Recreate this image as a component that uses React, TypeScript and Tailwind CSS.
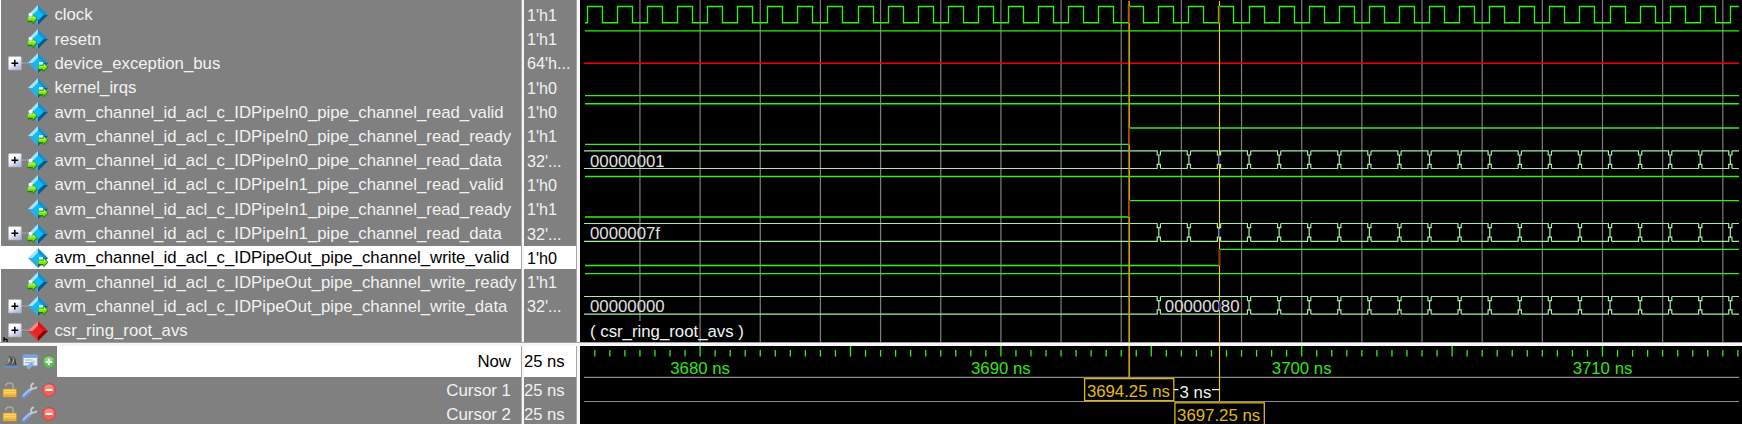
import React from "react";

type Kind = "in" | "out" | "group";
type Signal = { name: string; value: string; kind: Kind; expand?: boolean; selected?: boolean };

const signals: Signal[] = [
  { name: "clock", value: "1'h1", kind: "in" },
  { name: "resetn", value: "1'h1", kind: "in" },
  { name: "device_exception_bus", value: "64'h...", kind: "out", expand: true },
  { name: "kernel_irqs", value: "1'h0", kind: "out" },
  { name: "avm_channel_id_acl_c_IDPipeIn0_pipe_channel_read_valid", value: "1'h0", kind: "in" },
  { name: "avm_channel_id_acl_c_IDPipeIn0_pipe_channel_read_ready", value: "1'h1", kind: "out" },
  { name: "avm_channel_id_acl_c_IDPipeIn0_pipe_channel_read_data", value: "32'...", kind: "in", expand: true },
  { name: "avm_channel_id_acl_c_IDPipeIn1_pipe_channel_read_valid", value: "1'h0", kind: "in" },
  { name: "avm_channel_id_acl_c_IDPipeIn1_pipe_channel_read_ready", value: "1'h1", kind: "out" },
  { name: "avm_channel_id_acl_c_IDPipeIn1_pipe_channel_read_data", value: "32'...", kind: "in", expand: true },
  { name: "avm_channel_id_acl_c_IDPipeOut_pipe_channel_write_valid", value: "1'h0", kind: "out", selected: true },
  { name: "avm_channel_id_acl_c_IDPipeOut_pipe_channel_write_ready", value: "1'h1", kind: "in" },
  { name: "avm_channel_id_acl_c_IDPipeOut_pipe_channel_write_data", value: "32'...", kind: "out", expand: true },
  { name: "csr_ring_root_avs", value: "", kind: "group", expand: true },
];

function SignalIcon({ kind }: { kind: Kind }) {
  const c =
    kind === "group"
      ? { tl: "#f48a86", tr: "#d81414", bl: "#e03030", br: "#7e0000", mid: "#ee2222" }
      : { tl: "#a4e4f8", tr: "#1490d4", bl: "#3aa6e4", br: "#045a8c", mid: "#0cbcf4" };
  return (
    <svg className="h-[22px] w-[22px] shrink-0" viewBox="0 0 22 22">
      <path d="M11 1L11 11L1 11Z" fill={c.tl} />
      <path d="M11 1L21 11L11 11Z" fill={c.tr} />
      <path d="M1 11L11 11L11 21Z" fill={c.bl} />
      <path d="M21 11L11 21L11 11Z" fill={c.br} />
      <path d="M11 5.4L16.6 11L11 16.6L5.4 11Z" fill={c.mid} />
      {kind === "in" && (
        <g>
          <path d="M1.8 9H5.6V12.6H1.8Z" fill="#eefcff" />
          <path d="M0.6 13H5.8V9.8L10.6 15L5.8 20.4V18.2H0.6Z" fill="#1c7c08" />
          <path d="M0.6 13H5.8V10.6L9.8 14.6L5.8 18.8V16.8H0.6Z" fill="#7ae60c" />
          <path d="M1.2 13.5H6.6V12.2L8.4 14.2H1.2Z" fill="#d4fb88" />
        </g>
      )}
      {kind === "out" && (
        <g>
          <path d="M12 10H16V12.6H12Z" fill="#d8f6ff" />
          <path d="M11.4 13.4H16.4V10L21.4 15.2L16.4 20.6V18.4H11.4Z" fill="#1c7c08" />
          <path d="M11.4 13.4H16.4V10.8L20.6 15L16.4 19V17H11.4Z" fill="#7ae60c" />
          <path d="M12 13.9H17V12.6L18.8 14.6H12Z" fill="#d4fb88" />
        </g>
      )}
    </svg>
  );
}

function Expander() {
  return (
    <svg className="h-[22px] w-5 shrink-0" viewBox="0 0 20 22">
      <defs>
        <linearGradient id="box" x1="0" y1="0" x2="0.6" y2="1">
          <stop offset="0.4" stopColor="#ffffff" />
          <stop offset="1" stopColor="#b4bedc" />
        </linearGradient>
      </defs>
      <rect x="0.4" y="4.6" width="13" height="13.4" rx="1" fill="url(#box)" stroke="#a2aac6" strokeWidth="0.6" />
      <path d="M3.4 11.2H10.2M6.8 7.8V14.6" stroke="#000" strokeWidth="1.5" />
      <path d="M14.2 11H20" stroke="#c8c8c8" strokeWidth="1" strokeDasharray="1.2 1.2" />
    </svg>
  );
}

function CircleIcon({ plus }: { plus?: boolean }) {
  return (
    <svg className="h-4 w-4" viewBox="0 0 16 16">
      <circle cx="8" cy="8" r="6.5" fill={plus ? "#62b858" : "#ef5f55"} stroke={plus ? "#3e9c3a" : "#d83c36"} strokeWidth="0.8" />
      <path d="M3 6A5.4 5.4 0 0 1 13 6Q8 8.4 3 6Z" fill={plus ? "#8ccf80" : "#f78a80"} />
      <path d={plus ? "M4.6 8H11.4M8 4.6V11.4" : "M4.4 8H11.6"} stroke="#fff" strokeWidth="2.1" />
    </svg>
  );
}

function LockIcon() {
  return (
    <svg className="h-4 w-4" viewBox="0 0 16 16">
      <path d="M3.6 4.2Q4 1 7.4 1Q11 1 11.2 4V8" fill="none" stroke="#aca69c" strokeWidth="1.7" />
      <rect x="1" y="7" width="13.6" height="8" rx="0.6" fill="#f5bd3c" stroke="#c98e26" strokeWidth="0.7" />
      <path d="M1.8 8.3H13.8M1.8 10.8H13.8" stroke="#ffe08a" strokeWidth="1.1" />
      <path d="M1.8 13.2H13.8" stroke="#e5a32a" strokeWidth="1" />
    </svg>
  );
}

function WrenchIcon() {
  return (
    <svg className="h-[17px] w-[17px]" viewBox="0 0 17 17">
      <path d="M2.8 14.2L8.4 8.6" stroke="#6f96dc" strokeWidth="4.4" strokeLinecap="round" />
      <path d="M2.6 13.4L7.8 8.2" stroke="#a9c6f8" strokeWidth="1.6" strokeLinecap="round" />
      <path d="M8.4 8.6L11.2 5.8" stroke="#c6c6c6" strokeWidth="2.4" />
      <path d="M13 1.4Q9.6 2 10.2 5.2Q11.6 8 15.6 5.4M10.6 6.4Q13.4 7.4 15.8 4.8" fill="none" stroke="#cccccc" strokeWidth="1.8" />
    </svg>
  );
}

function NowIcon() {
  return (
    <svg className="h-4 w-[15px]" viewBox="0 0 15 16">
      <path d="M1.4 11.6L4.4 5.2L4 2.6L6.4 1.4L8 3.4L10 1.6L11.4 4.4L13.2 11.6Z" fill="#606060" />
      <path d="M5 2.4L6.4 6.4L3 11ZM9.6 3L10.4 7.6L8 10Z" fill="#a8a8a8" />
      <path d="M7.4 4L8 8M11 5L12 11" stroke="#3c3c3c" strokeWidth="1.2" />
      <path d="M1 13H14M1.2 11.2V14.6M13.6 11.2V14.6" stroke="#5a94e6" strokeWidth="1.2" />
    </svg>
  );
}

function PropsIcon() {
  return (
    <svg className="h-[17px] w-[17px]" viewBox="0 0 17 17">
      <rect x="1.2" y="1.8" width="14.4" height="11" rx="0.8" fill="#edf2fa" stroke="#8cacdf" strokeWidth="0.9" />
      <path d="M1.2 3.4H15.6" stroke="#709fe6" strokeWidth="2.8" />
      <path d="M3 7H11M3 9.6H9" stroke="#a8afbc" strokeWidth="1.2" />
      <path d="M6.8 14.2L10.4 10.6" stroke="#86abea" strokeWidth="4" strokeLinecap="round" />
      <path d="M10.4 10.6L13.4 8" stroke="#c4c8d0" strokeWidth="2" />
    </svg>
  );
}

const PX_PER_NS = 30.08;
const LEFT = 580;
const xAt = (t: number) => 1301.7 + (t - 3700) * PX_PER_NS - LEFT;
const X0 = 5;
const X1 = 1159;
const C1 = 549.2;
const C2 = 639.5;

const range = (n: number) => Array.from({ length: n }, (_, i) => i);

function clockPath() {
  let d = `M${X0} 22.7`;
  for (const i of range(39)) {
    const r = Math.floor(xAt(3676.25 + i)) + 0.5;
    const f = r + 15;
    d += `H${r}V6.5`;
    if (f < X1) d += `H${f}V22.7`;
  }
  return d + `H${X1}`;
}

function busPath(top: number, bottom: number, edges: number[]) {
  let d = "";
  let a = X0 - 1;
  for (const x of edges) {
    d += `M${a} ${top}H${x - 1.6}V${top + 4.2}H${x}V${bottom - 4.2}H${x - 1.6}V${bottom}H${a}`;
    d += `M${x} ${top + 4.2}H${x + 1.6}V${top}M${x} ${bottom - 4.2}H${x + 1.6}V${bottom}`;
    a = x + 1.6;
  }
  return d + `M${a} ${top}H${X1}M${a} ${bottom}H${X1}`;
}

const allEdges = range(20).map((i) => xAt(3695.25 + i));
const outEdges = allEdges.filter((_, i) => i !== 1 && i !== 2);

function Waves() {
  return (
    <svg className="block h-[342px] w-[1162px] shrink-0 bg-black" viewBox="0 0 1162 342" fontFamily="'Liberation Sans', Arial, sans-serif" fontSize="16.8">
      <g stroke="#7e7e7e" strokeWidth="1.2">
        {range(19).map((i) => (
          <path key={i} d={`M${xAt(3678 + i * 2)} 0V${i === 0 ? 321 : 342}`} />
        ))}
      </g>
      <g fill="none" stroke="#2cf40e" strokeWidth="1.35">
        <path d={clockPath()} />
        <path d={`M${X0} 30.8H${X1}`} />
        <path d={`M${X0} 95.6H${X1}`} />
        <path d={`M${X0} 103.7H${X1}`} />
        <path d={`M${X0} 144.4H${C1}V128H${X1}`} />
        <path d={`M${X0} 176.5H${X1}`} />
        <path d={`M${X0} 217H${C1}V200.6H${X1}`} />
        <path d={`M${X0} 265.5H${C2}V249.4H${X1}`} />
        <path d={`M${X0} 273.6H${X1}`} />
      </g>
      <path d={`M${X0 - 1} 63.3H${X1}`} stroke="#f00000" strokeWidth="1.5" />
      <g fill="none" stroke="#a4eea6" strokeWidth="1.2">
        <path d={busPath(150.8, 168.5, allEdges)} />
        <path d={busPath(223.5, 241.3, allEdges)} />
        <path d={busPath(296.5, 314.1, outEdges)} />
      </g>
      <g fill="#e0e0e0">
        <text x="10" y="166.6">00000001</text>
        <text x="10" y="239.4">0000007f</text>
        <text x="10" y="312.4">00000000</text>
        <text x="584.8" y="312.4">00000080</text>
        <text x="10" y="336.8" fill="#f4f4f4">( csr_ring_root_avs )</text>
      </g>
      <path d={`M${C1} 1V342`} stroke="#c89c0c" strokeWidth="1.7" />
      <path d={`M${C2} 1V342`} stroke="#f4cf10" strokeWidth="1.1" />
      <g stroke="#a82418" strokeWidth="1.5">
        <path d={`M${C1} 6V23M${C1} 127.5V144.5M${C1} 200V217`} />
        <path d={`M${C2} 6V23M${C2} 249V266`} />
      </g>
      <path d={`M${C2} 155.5V164M${C2} 229V237M${C2} 301V310`} stroke="#4422b8" strokeWidth="1.2" />
    </svg>
  );
}

function Timeline() {
  return (
    <svg className="block h-[78px] w-[1162px] shrink-0 bg-black" viewBox="0 346 1162 78" fontFamily="'Liberation Sans', Arial, sans-serif" fontSize="16.8">
      <g stroke="#2cf40e" strokeWidth="1.3">
        {range(77).map((i) => (
          <path key={i} d={`M${xAt(3676.5 + i / 2)} ${(i - 7) % 10 === 0 ? 346 : 350}V356.6`} />
        ))}
      </g>
      <g fill="#34e41c" textAnchor="middle">
        {[3680, 3690, 3700, 3710].map((t) => (
          <text key={t} x={xAt(t)} y="374">{t} ns</text>
        ))}
      </g>
      <path d="M4 377.4H1159M4 401.5H1159" stroke="#8a8a8a" strokeWidth="1.1" />
      <path d={`M${C1} 346V378`} stroke="#c89c0c" strokeWidth="1.7" />
      <path d={`M${C2} 346V401`} stroke="#f4cf10" strokeWidth="1.1" />
      <g fill="#000" stroke="#e0b80c" strokeWidth="1.3">
        <rect x="504.6" y="378.6" width="89.2" height="22" />
        <rect x="594.9" y="402.8" width="89.4" height="26" />
      </g>
      <g fill="#e0ba14" textAnchor="middle">
        <text x="548.4" y="397">3694.25 ns</text>
        <text x="638.6" y="421.2">3697.25 ns</text>
      </g>
      <path d="M594 389.6H598.4M632 389.6H639" stroke="#fff" strokeWidth="1.2" />
      <text x="599.6" y="398" fill="#f2f2f2">3 ns</text>
    </svg>
  );
}

function Divider() {
  return <div className="h-full w-[3px] shrink-0 border-l border-[#a8a8a8] bg-[#f6f6f6]" />;
}

const cursorRow = "flex h-[24.3px] shrink-0 items-center";

export default function App() {
  return (
    <div className="flex h-[424px] w-[1742px] flex-col overflow-hidden bg-[#f0f0f0] font-['Liberation_Sans',Arial,sans-serif] text-[16.2px] leading-[24px] whitespace-nowrap text-[#f2f2f2]">
      <div className="flex h-[342px] shrink-0">
        <div className="relative flex w-[521px] shrink-0 flex-col overflow-hidden border-l border-white bg-[#808080] pt-[2.9px]">
          {signals.map((s) => (
            <div key={s.name} className="h-[24.3px] shrink-0">
              <div className={s.selected ? "flex h-[23px] items-center bg-white pl-[7px] text-black" : "flex h-[23px] items-center pl-[7px]"}>
                {s.expand ? <Expander /> : <div className="w-5 shrink-0" />}
                <div className="-ml-px flex shrink-0 pt-px"><SignalIcon kind={s.kind} /></div>
                <span className="pt-[2px] pl-[5.4px] text-[16.77px]">{s.name}</span>
              </div>
            </div>
          ))}
          <svg className="absolute bottom-0 left-[2px] h-[5px] w-[5px]" viewBox="0 0 5 5">
            <path d="M1 0V4.4M1 2.4H4V5" stroke="#000" strokeWidth="1.3" fill="none" />
          </svg>
        </div>
        <Divider />
        <div className="flex w-[52px] shrink-0 flex-col overflow-hidden bg-[#808080] pt-[2.9px]">
          {signals.map((s) => (
            <div key={s.name} className="h-[24.3px] shrink-0">
              <div className={s.selected ? "h-[23px] bg-white pl-[3px] text-black" : "h-[23px] pl-[3px]"}>{s.value}</div>
            </div>
          ))}
        </div>
        <Divider />
        <div className="w-px shrink-0 bg-[#f6f6f6]" />
        <Waves />
      </div>
      <div className="h-1 shrink-0 border-t border-[#a0a0a0] bg-[#f6f6f6]" />
      <div className="flex h-[78px] shrink-0 overflow-hidden">
        <div className="flex w-[521px] shrink-0 flex-col bg-[#808080]">
          <div className="mb-[1.4px] flex h-[30.6px] shrink-0 items-center">
            <div className="flex w-[57px] shrink-0 items-center gap-[3px] pl-1 pt-px">
              <NowIcon />
              <PropsIcon />
              <CircleIcon plus />
            </div>
            <div className="flex h-full flex-1 items-center justify-end bg-white pr-[10px] pt-[2px] text-[16.8px] text-black">Now</div>
          </div>
          {["Cursor 1", "Cursor 2"].map((c) => (
            <div key={c} className={cursorRow}>
              <div className="flex w-[57px] shrink-0 items-center gap-[2px] pl-[2px]">
                <LockIcon />
                <div className="pl-px"><WrenchIcon /></div>
                <div className="pl-px"><CircleIcon /></div>
              </div>
              <div className="flex-1 pt-[2px] pr-[10px] text-right text-[16.9px]">{c}</div>
            </div>
          ))}
        </div>
        <Divider />
        <div className="flex w-[52px] shrink-0 flex-col bg-[#808080] text-[16.6px]">
          <div className="mb-[1.4px] flex h-[30.6px] shrink-0 items-center bg-white pt-[2px] text-black">25 ns</div>
          <div className={cursorRow}><span className="pt-[2px]">25 ns</span></div>
          <div className={cursorRow}><span className="pt-[2px]">25 ns</span></div>
        </div>
        <Divider />
        <div className="w-px shrink-0 bg-[#f6f6f6]" />
        <Timeline />
      </div>
    </div>
  );
}
